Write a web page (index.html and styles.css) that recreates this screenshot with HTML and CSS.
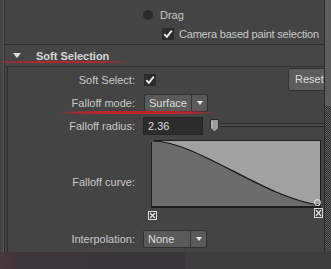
FILE: index.html
```html
<!DOCTYPE html>
<html>
<head>
<meta charset="utf-8">
<link rel="stylesheet" href="styles.css">
</head>
<body>
<div class="screen">
  <div class="main">
    <div class="edge"></div>
    <div class="panel">
      <div class="opts">
        <div class="opt opt-drag"><span class="radio"></span><span>Drag</span></div>
        <div class="opt opt-cam">
          <span class="check"><svg width="12" height="12" viewBox="0 0 12 12"><path d="M2.3 6.2 L4.8 8.9 L9.8 2.6" fill="none" stroke="#f2f2f2" stroke-width="1.8"/></svg></span>
          <span class="cam-text">Camera based paint selection</span>
        </div>
      </div>
      <div class="header"><span class="tri"></span><span class="title">Soft Selection</span></div>
      <div class="body">
        <div class="row row-ss">
          <span class="lbl">Soft Select:</span>
          <span class="check check-ss"><svg width="12" height="12" viewBox="0 0 12 12"><path d="M2.3 6.2 L4.8 8.9 L9.8 2.6" fill="none" stroke="#f2f2f2" stroke-width="1.8"/></svg></span>
          <span class="reset">Reset</span>
        </div>
        <div class="row row-fm">
          <span class="lbl">Falloff mode:</span>
          <span class="dd dd-fm"><span class="dd-text">Surface</span><span class="dd-arrow"><span class="arr"></span></span></span>
        </div>
        <div class="row row-fr">
          <span class="lbl">Falloff radius:</span>
          <span class="num">2.36</span>
          <svg class="handle" width="10" height="14" viewBox="0 0 10 14"><path d="M0.5 0.5 H8.5 V9.5 L4.5 13 L0.5 9.5 Z" fill="#9c9c9c" stroke="#2a2a2a"/><path d="M2 2 V9" stroke="#c4c4c4"/></svg>
          <span class="track"></span>
        </div>
        <div class="row row-fc">
          <span class="lbl lbl-fc">Falloff curve:</span>
          <svg class="curve" width="178" height="83" viewBox="0 0 178 83">
            <rect x="5" y="2" width="170" height="68" fill="#1d1d1d"/>
            <rect x="6" y="3" width="168" height="65" fill="#6c6c6c"/>
            <path d="M6 3 C51 3 116 59 173 67 L174 67 L174 3 Z" fill="#a1a1a1"/>
            <path d="M6 3 C51 3 116 59 173 67" fill="none" stroke="#141414" stroke-width="1.2"/>
            <rect x="5" y="2" width="3" height="2" fill="#3b4a66"/>
            <g>
              <rect x="2.5" y="73.5" width="8" height="8" fill="#3a3a3a" stroke="#e0e0e0"/>
              <path d="M4 75 L9 80 M9 75 L4 80" stroke="#e8e8e8" stroke-width="1.3"/>
            </g>
            <circle cx="171.5" cy="64.5" r="3" fill="none" stroke="#eeeeee" stroke-width="1"/>
            <g>
              <rect x="168.5" y="70.5" width="8" height="9" fill="#3a3a3a" stroke="#d8d8d8"/>
              <path d="M170 72 L175 78 M175 72 L170 78" stroke="#e0e0e0" stroke-width="1.3"/>
            </g>
          </svg>
        </div>
        <div class="row row-in">
          <span class="lbl">Interpolation:</span>
          <span class="dd dd-in"><span class="dd-text">None</span><span class="dd-arrow"><span class="arr"></span></span></span>
        </div>
      </div>
    </div>
    <div class="scroll"><div class="thumb"></div><div class="strack"></div></div>
  </div>
  <div class="bottom"><div class="b1"></div><div class="b2"></div></div>
  <span class="mark mark-h"></span>
  <span class="mark mark-fm"></span>
</div>
</body>
</html>
```

FILE: styles.css
```css
html, body {
  margin: 0;
  padding: 0;
}
body {
  background: #444444;
  font-family: "Liberation Sans", Arial, sans-serif;
  font-size: 11px;
  color: #c8c8c8;
  white-space: nowrap;
}
.screen {
  position: relative;
  width: 331px;
  height: 269px;
  overflow: hidden;
  display: flex;
  flex-direction: column;
}
.main {
  display: flex;
  height: 252px;
}
.edge {
  width: 5px;
  background: linear-gradient(to right, #444 0 3px, #5a5a5a 3px 4px, #2d2d2d 4px 5px);
}
.panel {
  flex: 1;
  min-width: 0;
  overflow: hidden;
  display: flex;
  flex-direction: column;
}
.scroll {
  width: 7px;
  box-sizing: border-box;
  border-left: 1px solid #2b2b2b;
  display: flex;
  flex-direction: column;
}
.thumb {
  height: 106px;
  background: #5c5c5c;
}
.strack {
  flex: 1;
  background: repeating-conic-gradient(#5e5e5e 0 25%, #303030 0 50%) 0 0 / 2px 2px;
}
.bottom {
  flex: 1;
  display: flex;
}
.b1 {
  width: 185px;
  background: linear-gradient(to right, #4a373b 0, #3b3639 12%, #38363a 100%);
}
.b2 {
  flex: 1;
  background: #3e3e3e;
}

/* top options */
.opts {
  height: 44px;
  display: flex;
  flex-direction: column;
}
.opt {
  display: flex;
  align-items: center;
  height: 12px;
  line-height: 12px;
}
.opt-drag {
  margin-top: 9px;
  padding-left: 138px;
  gap: 7px;
}
.opt-cam {
  margin-top: 7px;
  padding-left: 157px;
  gap: 5px;
}
.cam-text {
  letter-spacing: -0.2px;
}
.radio {
  width: 10px;
  height: 10px;
  border-radius: 50%;
  background: #2a2a2a;
}
.check {
  width: 12px;
  height: 12px;
  background: #2b2b2b;
  display: flex;
  flex: none;
}

/* header */
.header {
  height: 21px;
  border-top: 1px solid #2f2f2f;
  border-bottom: 1px solid #333333;
  background: #464646;
  display: flex;
  align-items: center;
  padding-left: 8px;
}
.tri {
  width: 0;
  height: 0;
  border-left: 4px solid transparent;
  border-right: 4px solid transparent;
  border-top: 5px solid #dcdcdc;
  margin-right: 15px;
}
.title {
  font-weight: bold;
  color: #d6d6d6;
}

/* body */
.body {
  flex: 1;
  margin-left: 2px;
  border-left: 1px solid #2f2f2f;
  display: flex;
  flex-direction: column;
}
.row {
  display: flex;
  align-items: center;
}
.lbl {
  width: 127px;
  margin-right: 8px;
  text-align: right;
  flex: none;
}
.row-ss {
  margin-top: 1px;
  height: 23px;
}
.check-ss {
  margin-left: 1px;
}
.reset {
  margin-left: auto;
  margin-right: -8px;
  width: 44px;
  height: 23px;
  box-sizing: border-box;
  border: 1px solid #333;
  border-radius: 3px;
  background: #5d5d5d;
  color: #dcdcdc;
  padding-left: 6px;
  line-height: 21px;
  flex: none;
}
.row-fm {
  margin-top: 3px;
  height: 18px;
}
.row-fr {
  margin-top: 5px;
  height: 18px;
}
.row-fc {
  margin-top: 3px;
  height: 83px;
  align-items: flex-start;
}
.lbl-fc {
  padding-top: 38px;
}
.row-in {
  margin-top: 9px;
  height: 18px;
}

.dd {
  display: flex;
  width: 64px;
  height: 18px;
  box-sizing: border-box;
  border: 1px solid #303030;
  border-radius: 2px;
  background: #5a5a5a;
  flex: none;
}
.dd-fm {
  margin-left: 1px;
}
.dd-text {
  flex: 1;
  padding-left: 4px;
  line-height: 16px;
  color: #dcdcdc;
}
.dd-arrow {
  width: 15px;
  border-left: 1px solid #363636;
  display: flex;
  align-items: center;
  justify-content: center;
}
.arr {
  width: 0;
  height: 0;
  border-left: 3.5px solid transparent;
  border-right: 3.5px solid transparent;
  border-top: 4px solid #e6e6e6;
}
.num {
  width: 60px;
  height: 18px;
  box-sizing: border-box;
  border: 1px solid #262626;
  background: #2c2c2c;
  padding-left: 4px;
  line-height: 16px;
  color: #dedede;
  flex: none;
}
.handle {
  margin-left: 7px;
  flex: none;
}
.track {
  flex: 1;
  height: 4px;
  box-sizing: border-box;
  border-top: 1px solid #2a2a2a;
  border-bottom: 1px solid #2a2a2a;
  background: #4a4a4a;
  margin-top: -2px;
}
.curve {
  margin-left: 3px;
  flex: none;
}

/* red annotation strokes drawn over the screenshot */
.mark {
  position: absolute;
  border-radius: 50%;
}
.mark-h {
  left: 0;
  top: 61px;
  width: 134px;
  height: 2px;
  background: linear-gradient(to right, #b3262b 0, #b3262b 80%, rgba(179, 38, 43, 0) 100%);
}
.mark-fm {
  left: 56px;
  top: 111px;
  width: 162px;
  height: 3px;
  background: linear-gradient(to right, rgba(190, 36, 42, 0) 0, #c0242a 15%, #c0242a 85%, rgba(190, 36, 42, 0) 100%);
}
```
